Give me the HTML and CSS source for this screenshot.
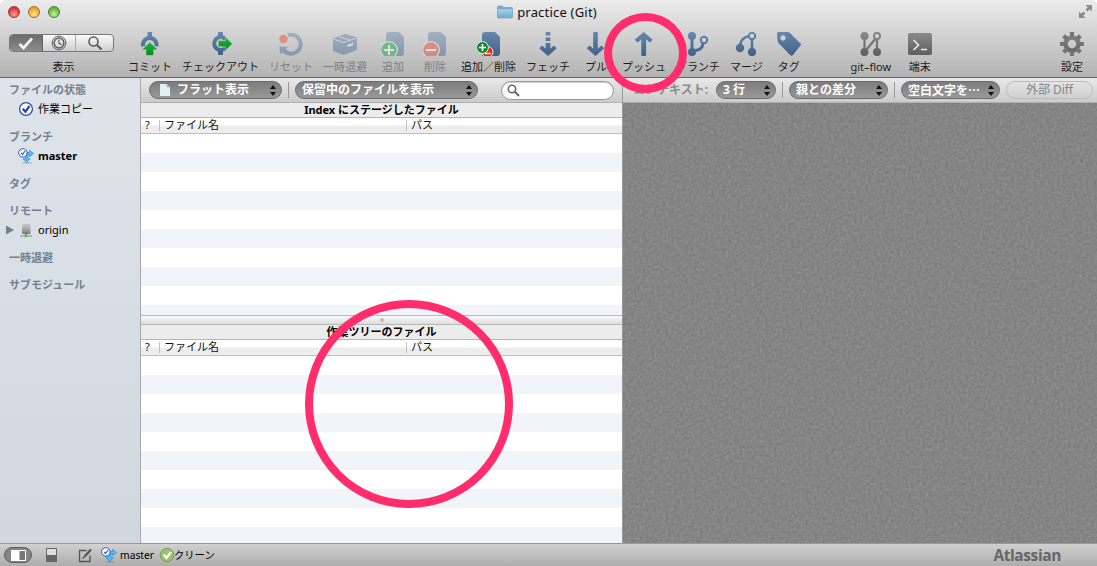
FILE: index.html
```
<!DOCTYPE html>
<html lang="ja">
<head>
<meta charset="utf-8">
<title>practice (Git)</title>
<link rel="stylesheet" href="styles.css">
</head>
<body>
<svg class="defs" width="0" height="0">
  <defs>
    <linearGradient id="blue" x1="0" y1="0" x2="0" y2="24" gradientUnits="userSpaceOnUse"><stop offset="0" stop-color="#6688ae"/><stop offset="1" stop-color="#3f6089"/></linearGradient>
    <linearGradient id="grey" x1="0" y1="0" x2="0" y2="24" gradientUnits="userSpaceOnUse"><stop offset="0" stop-color="#8c8c8c"/><stop offset="1" stop-color="#5c5c5c"/></linearGradient>
    <linearGradient id="green" x1="0" y1="0" x2="0" y2="1"><stop offset="0" stop-color="#22b53c"/><stop offset="1" stop-color="#0c8a22"/></linearGradient>
    <linearGradient id="sky" x1="0" y1="0" x2="0" y2="1"><stop offset="0" stop-color="#a9d2ea"/><stop offset="1" stop-color="#73abd1"/></linearGradient>
    <linearGradient id="server" x1="0" y1="0" x2="0" y2="1"><stop offset="0" stop-color="#e8e8e8"/><stop offset="1" stop-color="#777"/></linearGradient>
    <symbol id="branch-badge" viewBox="0 0 16 16">
      <ellipse cx="9" cy="14.800" rx="5" ry="1" fill="#777" opacity=".35"/>
      <path d="M7 4.500h4.500V2.300L15.600 5.500 11.500 8.700V6.800H10v4h2.300L8.600 14.600 5 10.800h2.200z" fill="#55bdf3" stroke="#2587ca" stroke-width=".6"/>
      <circle cx="4.800" cy="4.900" r="4.200" fill="#fff" stroke="#3154b8" stroke-width="1"/>
      <path d="M3 4.900l1.500 1.600L7 3" fill="none" stroke="#3154b8" stroke-width="1.200"/>
    </symbol>
  </defs>
</svg>
<div class="window">
  <header class="chrome">
    <div class="titlebar">
      <div class="lights"><i class="light red"></i><i class="light amber"></i><i class="light green"></i></div>
      <div class="title">
        <svg width="16" height="14" viewBox="0 0 16 14"><path d="M.5 2q0-1 1-1h4l1.200 1.500h8q.800 0 .800.800V12q0 1-1 1h-13q-1 0-1-1z" fill="#78abcf" stroke="#6597ba" stroke-width=".6"/><path d="M.8 4.200h14.400V12q0 .800-.800.800H1.600q-.800 0-.800-.800z" fill="url(#sky)"/></svg>
        <span>practice (Git)</span>
      </div>
      <svg class="expand" width="15" height="15" viewBox="0 0 15 15" fill="#8b8b8b"><path d="M7.500 1h6.500v6.500l-2.200-2.200-2.300 2.300-2-2 2.300-2.300zM1 7.500l2.200 2.200 2.300-2.300 2 2-2.300 2.300L7.500 14H1z"/></svg>
    </div>
    <nav class="toolbar">
      <div class="tool view">
        <div class="segments">
          <span class="seg on"><svg width="16" height="13" viewBox="0 0 16 13"><path d="M1.500 7l4 4L14 1.500" fill="none" stroke="#f4f4f4" stroke-width="2.700"/></svg></span>
          <span class="seg"><svg width="16" height="16" viewBox="0 0 16 16" fill="none" stroke="#5c5c5c"><circle cx="8" cy="8" r="6.900" stroke-width="1"/><circle cx="8" cy="8" r="4.900" stroke-width="1.500"/><path d="M8 4.500v3.800l2.500 1.500" stroke-width="1.200"/></svg></span>
          <span class="seg"><svg width="16" height="16" viewBox="0 0 16 16" fill="none" stroke="#5c5c5c"><circle cx="6.500" cy="6.500" r="4.500" stroke-width="1.600"/><path d="M10 10l4.500 4.500" stroke-width="2.200"/></svg></span>
        </div>
        <span class="label">表示</span>
      </div>
      <div class="tool">
        <svg class="icon" viewBox="0 0 24 24"><path d="M9.500 5V.8q0-.8.800-.8h2.900q.8 0 .8.800V5z" fill="url(#blue)"/><path d="M5.100 14.300A6.800 6.800 0 1 1 18.400 14.300" fill="none" stroke="url(#blue)" stroke-width="4"/><path d="M11.800 10.200l7.400 7.400h-3.800v5.600H8.200v-5.600H4.400z" fill="url(#green)" stroke="#cfcfcf" stroke-width="1" paint-order="stroke"/></svg>
        <span class="label">コミット</span>
      </div>
      <div class="tool">
        <svg class="icon" viewBox="0 0 24 24"><path d="M9 5V.8q0-.8.800-.8h3.400q.8 0 .8.800V5zM9 18v4.200q0 .8.800.8h3.400q.8 0 .8-.8V18z" fill="url(#blue)"/><path d="M16.500 7.200A6.500 6.500 0 1 0 16.500 16" fill="none" stroke="url(#blue)" stroke-width="4"/><path d="M9.500 8.800h7V5.200l6.700 6.500-6.700 6.500v-3.600h-7z" fill="url(#green)" stroke="#cfcfcf" paint-order="stroke"/></svg>
        <span class="label">チェックアウト</span>
      </div>
      <div class="tool off">
        <svg class="icon" viewBox="0 0 24 24"><path d="M9 3.200A9.500 9.500 0 1 1 5.500 19" fill="none" stroke="url(#blue)" stroke-width="4"/><path d="M.5 14.500l8.500.5-1.800 2L9 21l-3.500 1L4 20.500 1 22z" fill="url(#blue)"/><circle cx="4.500" cy="7" r="4.200" fill="#f03f2c"/></svg>
        <span class="label">リセット</span>
      </div>
      <div class="tool off">
        <svg class="icon" viewBox="0 0 24 24"><path d="M0 6.500L12.500 1.800l11.500 3.700v12.500L10.500 23 0 19z" fill="url(#blue)"/><path d="M.5 7l10 3.500L23.500 6M6.500 4.800l11 3.500" stroke="#dbe3eb" stroke-width=".9" fill="none"/><path d="M14.500 12.800l5.500-1.900v2.400l-5.500 1.900z" fill="#e6ecf2"/></svg>
        <span class="label">一時退避</span>
      </div>
      <div class="tool off">
        <svg class="icon" viewBox="0 0 24 24"><path d="M5 3q0-3 3-3h10l5 5v16q0 3-3 3H5z" fill="url(#blue)"/><circle cx="8" cy="18" r="8.300" fill="#10a33b" stroke="#eee" stroke-width="1.200"/><path d="M8 13v10M3 18h10" stroke="#fff" stroke-width="2"/></svg>
        <span class="label">追加</span>
      </div>
      <div class="tool off">
        <svg class="icon" viewBox="0 0 24 24"><path d="M5 3q0-3 3-3h10l5 5v16q0 3-3 3H5z" fill="url(#blue)"/><circle cx="8" cy="18" r="8.300" fill="#ef4433" stroke="#eee" stroke-width="1.200"/><path d="M3 18h10" stroke="#fff" stroke-width="2"/></svg>
        <span class="label">削除</span>
      </div>
      <div class="tool">
        <svg class="icon" viewBox="0 0 24 24"><path d="M5 3q0-3 3-3h10l5 5v16q0 3-3 3H5z" fill="url(#blue)"/><circle cx="10.500" cy="20" r="5.500" fill="#e6291c" stroke="#eee"/><path d="M8 21.500h6" stroke="#fff" stroke-width="1.500"/><circle cx="5.500" cy="15.500" r="5.900" fill="#0b8c2b" stroke="#eee"/><path d="M5.500 12v7M2 15.500h7" stroke="#fff" stroke-width="1.600"/></svg>
        <span class="label">追加／削除</span>
      </div>
      <div class="tool">
        <svg class="icon" viewBox="0 0 24 24"><path d="M9.700 0h4.600v3.500H9.700zM9.700 5.500h4.600V9H9.700z" fill="url(#blue)"/><path d="M9.700 11h4.600v5.800l3.500-3.300 3 2.800L12 24l-8.800-7.700 3-2.800 3.500 3.300z" fill="url(#blue)"/></svg>
        <span class="label">フェッチ</span>
      </div>
      <div class="tool">
        <svg class="icon" viewBox="0 0 24 24"><path d="M9.200 1q0-1 1-1h2.600q1 0 1 1v15.800l3.500-3.300 3 2.800L11.500 24l-8.800-7.700 3-2.800 3.500 3.300z" fill="url(#blue)"/></svg>
        <span class="label">プル</span>
      </div>
      <div class="tool">
        <svg class="icon" viewBox="0 0 24 24"><path d="M9.300 23q0 1 1 1h2.800q1 0 1-1V7.200l3.600 3.300 3-2.800L11.700 0 2.700 7.700l3 2.800 3.600-3.300z" fill="url(#blue)"/></svg>
        <span class="label">プッシュ</span>
      </div>
      <div class="tool">
        <svg class="icon" viewBox="0 0 24 24"><g fill="none" stroke="url(#blue)" stroke-width="3"><path d="M6 4v16.010M7 19q10-1 10-8"/><circle cx="18" cy="8" r="3.200" stroke-width="2"/></g><g fill="url(#blue)"><circle cx="6" cy="4" r="4"/><circle cx="6" cy="20" r="4"/></g></svg>
        <span class="label">ブランチ</span>
      </div>
      <div class="tool">
        <svg class="icon" viewBox="0 0 24 24"><g fill="none" stroke="url(#blue)" stroke-width="2.500"><path d="M18 6v13.010M15 4Q6 6 6 15"/><circle cx="18" cy="4" r="3.200" stroke-width="2"/></g><g fill="url(#blue)"><circle cx="6" cy="16" r="4.200"/><circle cx="18" cy="20" r="4.200"/></g></svg>
        <span class="label">マージ</span>
      </div>
      <div class="tool">
        <svg class="icon" viewBox="0 0 24 24"><path fill-rule="evenodd" d="M0 1.500Q0 0 1.500 0h9q1.500 0 2.500 1l10.500 10.500q1 1 0 2L16 23q-1.500 1.500-3 0L1.500 11Q.8 10 .6 9zM6 3.300a2.700 2.700 0 1 0 .010 0z" fill="url(#blue)"/></svg>
        <span class="label">タグ</span>
      </div>
      <div class="tool flow">
        <svg class="icon" viewBox="0 0 24 24"><path d="M5.500 4v16M18 7v13M5.500 20L17 6" stroke="#747474" stroke-width="2.200"/><g fill="url(#grey)"><circle cx="5.500" cy="4" r="4"/><circle cx="5.500" cy="20" r="4"/><circle cx="18" cy="20" r="4"/></g><circle cx="18" cy="4" r="3" fill="#d7d7d7" stroke="#828282" stroke-width="2"/></svg>
        <span class="label">git–flow</span>
      </div>
      <div class="tool">
        <svg class="icon" viewBox="0 0 24 24"><rect y="1" width="24" height="22" rx="2" fill="url(#grey)"/><path d="M5.500 8l5 5-5 5M13 17.500h6" fill="none" stroke="#e8e8e8" stroke-width="1.700"/></svg>
        <span class="label">端末</span>
      </div>
      <div class="tool settings">
        <svg class="icon" viewBox="0 0 24 24"><circle cx="12" cy="12" r="6.500" fill="none" stroke="url(#grey)" stroke-width="4.500"/><g stroke="#747474" stroke-width="4.200"><path d="M12 0v5M12 19v5M0 12h5M19 12h5M3.700 3.700l3.500 3.500M16.800 16.800l3.500 3.500M20.300 3.700l-3.500 3.500M7.200 16.800l-3.500 3.500"/></g></svg>
        <span class="label">設定</span>
      </div>
    </nav>
  </header>

  <main class="body">
    <aside class="sidebar">
      <section><h2>ファイルの状態</h2>
        <div class="entry"><svg width="16" height="16" viewBox="0 0 16 16"><circle cx="8" cy="8" r="6.400" fill="#fff" stroke="#2b4bb0" stroke-width="1.300"/><path d="M4.800 7.700l2.600 3L11.500 5" fill="none" stroke="#2545ad" stroke-width="2.200"/></svg><span>作業コピー</span></div>
      </section>
      <section><h2>ブランチ</h2>
        <div class="entry current"><svg width="16" height="16"><use href="#branch-badge"/></svg><span>master</span></div>
      </section>
      <section><h2>タグ</h2></section>
      <section><h2>リモート</h2>
        <div class="entry remote"><svg class="twisty" width="8" height="10" viewBox="0 0 8 10"><path d="M0 .5l8 4.500-8 4.500z" fill="#6f7f90"/></svg><svg width="16" height="16" viewBox="0 0 16 16"><rect x="4" y=".5" width="8.500" height="11.500" rx="1" fill="url(#server)"/><path d="M5 3h6.500M5 5.200h6.500M5 7.400h6.500" stroke="#aaa" stroke-width=".8"/><path d="M2 14h12" stroke="#888"/><path d="M8 12v2" stroke="#666" stroke-width="2"/><circle cx="8" cy="14" r="1.600" fill="#45d845"/></svg><span>origin</span></div>
      </section>
      <section><h2>一時退避</h2></section>
      <section><h2>サブモジュール</h2></section>
    </aside>

    <section class="files">
      <div class="filter">
        <div class="pop flat"><svg width="10" height="12" viewBox="0 0 10 12"><path d="M0 0h6.500L10 3.500V12H0z" fill="#e3f0f1"/><path d="M6.500 0v3.500H10z" fill="#a9c0c4"/></svg><span>フラット表示</span><i class="arrows"></i></div>
        <i class="rule"></i>
        <div class="pop pending"><span>保留中のファイルを表示</span><i class="arrows"></i></div>
        <div class="search"><svg width="13" height="13" viewBox="0 0 13 13" fill="none" stroke="#666"><circle cx="5" cy="5" r="3.700" stroke-width="1.600"/><path d="M7.800 7.800L12 12" stroke-width="2"/></svg></div>
      </div>
      <h3 class="caption">Index にステージしたファイル</h3>
      <div class="columns"><span class="c-flag">?</span><span class="c-name">ファイル名</span><span class="c-path">パス</span></div>
      <div class="rows staged"></div>
      <div class="splitter"><i></i></div>
      <h3 class="caption">作業ツリーのファイル</h3>
      <div class="columns"><span class="c-flag">?</span><span class="c-name">ファイル名</span><span class="c-path">パス</span></div>
      <div class="rows working"></div>
    </section>

    <section class="diff">
      <div class="filter">
        <span class="context">コンテキスト:</span>
        <div class="pop lines"><span>3 行</span><i class="arrows"></i></div>
        <i class="rule"></i>
        <div class="pop parent"><span>親との差分</span><i class="arrows"></i></div>
        <i class="rule"></i>
        <div class="pop blank"><span>空白文字を<span class="dots">…</span></span><i class="arrows"></i></div>
        <div class="external">外部 Diff</div>
      </div>
      <svg class="linen" width="100%" height="100%"><filter id="grain" x="0" y="0" width="100%" height="100%" color-interpolation-filters="sRGB"><feTurbulence type="fractalNoise" baseFrequency=".35" numOctaves="2" seed="4"/><feColorMatrix values=".12 0 0 0 .46 .12 0 0 0 .46 .12 0 0 0 .46 0 0 0 0 1"/></filter><rect width="100%" height="100%" filter="url(#grain)"/></svg>
    </section>
  </main>

  <footer class="status">
    <span class="toggle"><svg width="15" height="11" viewBox="0 0 15 11"><path d="M0 0h15v11H0z" fill="#fff"/><path d="M8.500 1H14v9H8.500z" fill="#777"/></svg></span>
    <svg class="half" width="11" height="14" viewBox="0 0 11 14"><path d="M.5.5h10v13H.5z" fill="#ddd" stroke="#666"/><path d="M0 7h11v7H0z" fill="#666"/></svg>
    <svg class="edit" width="15" height="15" viewBox="0 0 15 15" fill="none" stroke="#555"><path d="M8.500 2.500H1.500v11h10.500V7.500" stroke-width="1.300"/><path d="M6.500 8.500l6.500-7" stroke-width="2.300"/><path d="M4.700 10.500l1.800-2" stroke-width="1.300"/></svg>
    <svg class="badge" width="16" height="16"><use href="#branch-badge"/></svg>
    <span class="branch">master</span>
    <svg class="clean" width="16" height="16" viewBox="0 0 16 16"><circle cx="8" cy="8" r="6.800" fill="#9bc168" stroke="#7a9c55"/><path d="M4.500 7.500l3 3.500 4.500-6" fill="none" stroke="#fff" stroke-width="2.200"/></svg>
    <span class="state">クリーン</span>
    <strong class="brand">Atlassian</strong>
  </footer>
  <i class="ring push"></i>
  <i class="ring tree"></i>
</div>
</body>
</html>
```
FILE: styles.css
```
* { box-sizing: border-box; }
body { margin: 0; font: 11px/16px "Noto Sans", "Noto Sans CJK JP", sans-serif; color: #111; background: #fff; }
svg { display: block; flex: none; }
h2, h3 { margin: 0; }
.defs { position: absolute; }
.window { position: relative; width: 1097px; height: 566px; display: flex; flex-direction: column; overflow: hidden; white-space: nowrap; border-radius: 5px 5px 0 0; }

.chrome { height: 78px; background: linear-gradient(#ececec, #b3b3b3); border-bottom: 1px solid #666; }
.titlebar { height: 23px; display: flex; align-items: center; justify-content: space-between; padding: 0 4px 0 8px; }
.lights { display: flex; gap: 8px; width: 90px; }
.light { width: 12px; height: 12px; border-radius: 50%; border: 1px solid #666; }
.red { background: radial-gradient(circle at 50% 75%, #ffa09a, #e0393a 65%); border-color: #993333; }
.amber { background: radial-gradient(circle at 50% 75%, #ffe98b, #eda333 65%); border-color: #a06b24; }
.green { background: radial-gradient(circle at 50% 75%, #c8f39a, #68b743 65%); border-color: #4c7d33; }
.title { display: flex; align-items: center; gap: 4px; font-size: 13px; letter-spacing: .2px; }
.expand { margin-left: 82px; }
.toolbar { display: flex; gap: 10px; padding: 9px 9px 0 9px; }
.tool { min-width: 32px; display: flex; flex-direction: column; align-items: center; color: #1c1c1c; }
.tool.off { color: #7f7f7f; }
.tool.off .icon { opacity: .45; }
.icon { width: 24px; height: 24px; }
.label { margin-top: 3px; }
.view { width: 105px; margin-right: 4px; }
.view .label { padding-left: 4px; }
.segments { display: flex; width: 105px; height: 18px; margin: 2px 0 4px; border: 1px solid #777; border-radius: 4px; background: linear-gradient(#fafafa, #cfcfcf); overflow: hidden; }
.seg { flex: 1; display: flex; align-items: center; justify-content: center; }
.seg.on { background: linear-gradient(#6b6b6b, #8c8c8c); border-right: 1px solid #666; }
.seg + .seg + .seg { border-left: 1px solid #aaa; flex: 1.150; }
.flow { margin-left: 34px; width: 44px; margin-right: 1px; }
.settings { margin-left: auto; }

.body { flex: 1; min-height: 0; display: flex; }
.sidebar { width: 141px; padding-top: 2px; border-right: 1px solid #a9a9a9; background: linear-gradient(#dfe4ea, #d0d7df); }
.sidebar section { margin-bottom: 8px; }
.sidebar h2 { padding-left: 9px; font-size: 11px; line-height: 19px; font-weight: 700; color: #71818f; }
.entry { height: 20px; padding-left: 18px; display: flex; align-items: center; gap: 4px; color: #000; }
.current { font-weight: 700; }
.remote { padding-left: 6px; }

.filter { height: 25px; display: flex; align-items: center; background: linear-gradient(#e9e9e9, #cbcbcb); border-bottom: 1px solid #b0b0b0; flex: none; }
.pop { height: 18px; display: flex; align-items: center; border-radius: 9px; background: linear-gradient(#7c7c7c, #999); border: 1px solid #6c6c6c; color: #fff; font-size: 12px; font-weight: 700; padding: 0 5px 0 6px; }
.dots { font-family: "Noto Sans CJK JP", sans-serif; }
.arrows { margin-left: auto; display: flex; flex-direction: column; gap: 3px; }
.arrows::before, .arrows::after { content: ""; border: 3px solid transparent; border-bottom: 4px solid #111; border-top: 0; }
.arrows::after { border-top: 4px solid #111; border-bottom: 0; }
.rule { width: 1px; height: 16px; background: #999; }
.files { width: 481px; display: flex; flex-direction: column; }
.files .filter { padding-left: 8px; }
.flat { width: 133px; padding-left: 10px; gap: 7px; }
.files .rule { margin: 0 6px; }
.pending { width: 183px; }
.search { width: 113px; height: 19px; margin-left: 23px; border: 1px solid #999; border-radius: 10px; background: #fff; display: flex; align-items: center; padding-left: 5px; box-shadow: inset 0 1px 1px #ccc; }
.caption { height: 15px; border-bottom: 1px solid #b5b5b5; background: #ececec; text-align: center; font-size: 11px; line-height: 14px; font-weight: 700; color: #000; flex: none; }
.columns { height: 16px; display: flex; align-items: center; line-height: 14px; border-bottom: 1px solid #bebebe; background: linear-gradient(#fff 45%, #ececec 55%, #eee); flex: none; }
.c-flag { width: 18px; height: 15px; line-height: 13px; padding-left: 4px; }
.c-name { width: 247px; padding-left: 4px; border-left: 1px solid #c2c2c2; height: 11px; line-height: 10px; }
.c-path { padding-left: 4px; border-left: 1px solid #c2c2c2; height: 11px; line-height: 10px; }
.rows { background: repeating-linear-gradient(#fff 0 19px, #f1f5fa 19px 38px); }
.staged { height: 181px; flex: none; }
.working { flex: 1; }
.splitter { height: 10px; border: solid #b8b8b8; border-width: 1px 0; background: linear-gradient(#fafafa, #ddd); display: flex; align-items: center; justify-content: center; flex: none; }
.splitter i { width: 4px; height: 4px; border-radius: 50%; background: #bbb; }

.diff { flex: 1; min-width: 0; display: flex; flex-direction: column; border-left: 1px solid #999; background: #858585; }
.diff .filter { padding-left: 10px; }
.context { width: 83px; font-size: 12px; font-weight: 700; color: #8b8b8b; }
.lines { width: 60px; }
.diff .rule { margin: 0 6px; }
.parent { width: 99px; }
.blank { width: 99px; }
.external { width: 87px; height: 18px; margin-left: 6px; border: 1px solid #bcbcbc; border-radius: 9px; text-align: center; line-height: 16px; font-size: 12px; color: #858585; }
.linen { flex: 1; min-height: 0; }

.status { height: 23px; display: flex; align-items: center; padding: 0 36px 0 4px; border-top: 1px solid #999; background: linear-gradient(#d1d1d1, #adadad); color: #000; }
.toggle { width: 28px; height: 16px; border-radius: 8px; background: #858585; border: 1px solid #5f5f5f; display: flex; align-items: center; justify-content: center; }
.half { margin-left: 14px; }
.edit { margin-left: 21px; }
.badge { margin-left: 8px; }
.branch { margin: 0 7px 0 3px; width: 33px; font-size: 10.300px; }
.state { font-size: 10.300px; }
.clean { margin-left: -1px; margin-right: -1px; }
.brand { margin-left: auto; font: 700 15.500px/20px "Open Sans", sans-serif; color: #646668; letter-spacing: -.4px; }

.ring { position: absolute; border: 8px solid #ff2d6c; border-radius: 50%; }
.push { left: 604px; top: 13px; width: 83px; height: 80px; }
.tree { left: 305px; top: 300px; width: 208px; height: 208px; }
```
